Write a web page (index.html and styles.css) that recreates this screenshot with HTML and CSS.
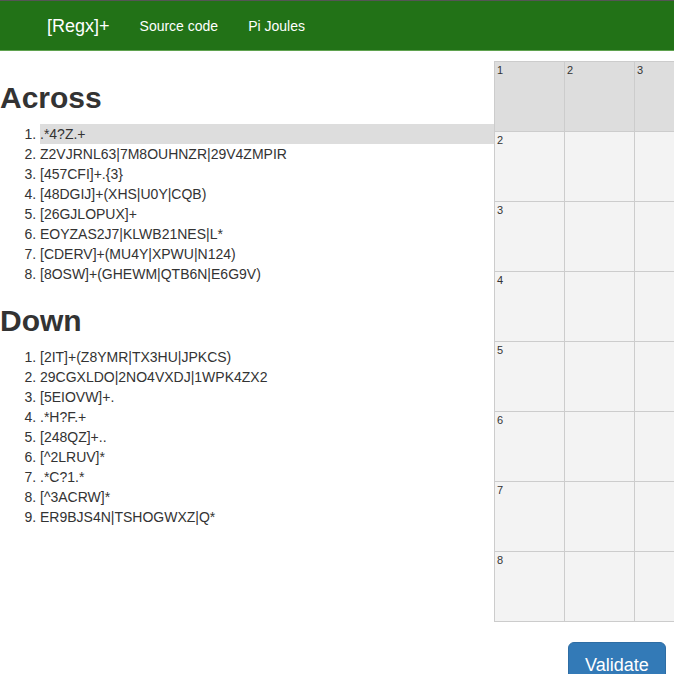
FILE: index.html
```html
<!DOCTYPE html>
<html>
<head>
<meta charset="utf-8">
<link rel="stylesheet" href="styles.css">
</head>
<body>
<nav class="navbar">
  <a class="brand">[Regx]+</a>
  <a class="nav-link">Source code</a>
  <a class="nav-link">Pi Joules</a>
</nav>
<div class="main">
  <div class="clues">
    <h2>Across</h2>
    <ol>
      <li class="active">.*4?Z.+</li>
      <li>Z2VJRNL63|7M8OUHNZR|29V4ZMPIR</li>
      <li>[457CFI]+.{3}</li>
      <li>[48DGIJ]+(XHS|U0Y|CQB)</li>
      <li>[26GJLOPUX]+</li>
      <li>EOYZAS2J7|KLWB21NES|L*</li>
      <li>[CDERV]+(MU4Y|XPWU|N124)</li>
      <li>[8OSW]+(GHEWM|QTB6N|E6G9V)</li>
    </ol>
    <h2>Down</h2>
    <ol>
      <li>[2IT]+(Z8YMR|TX3HU|JPKCS)</li>
      <li>29CGXLDO|2NO4VXDJ|1WPK4ZX2</li>
      <li>[5EIOVW]+.</li>
      <li>.*H?F.+</li>
      <li>[248QZ]+..</li>
      <li>[^2LRUV]*</li>
      <li>.*C?1.*</li>
      <li>[^3ACRW]*</li>
      <li>ER9BJS4N|TSHOGWXZ|Q*</li>
    </ol>
  </div>
  <div class="board">
    <table class="grid">
      <tr class="hl"><td><span class="num">1</span></td><td><span class="num">2</span></td><td><span class="num">3</span></td><td></td><td></td><td></td><td></td><td></td><td></td></tr>
      <tr><td><span class="num">2</span></td><td></td><td></td><td></td><td></td><td></td><td></td><td></td><td></td></tr>
      <tr><td><span class="num">3</span></td><td></td><td></td><td></td><td></td><td></td><td></td><td></td><td></td></tr>
      <tr><td><span class="num">4</span></td><td></td><td></td><td></td><td></td><td></td><td></td><td></td><td></td></tr>
      <tr><td><span class="num">5</span></td><td></td><td></td><td></td><td></td><td></td><td></td><td></td><td></td></tr>
      <tr><td><span class="num">6</span></td><td></td><td></td><td></td><td></td><td></td><td></td><td></td><td></td></tr>
      <tr><td><span class="num">7</span></td><td></td><td></td><td></td><td></td><td></td><td></td><td></td><td></td></tr>
      <tr><td><span class="num">8</span></td><td></td><td></td><td></td><td></td><td></td><td></td><td></td><td></td></tr>
    </table>
    <button class="btn">Validate</button>
  </div>
</div>
</body>
</html>
```
FILE: styles.css
```css
html, body {
  margin: 0;
  padding: 0;
}
body {
  font-family: "Liberation Sans", Arial, sans-serif;
  font-size: 14px;
  line-height: 20px;
  color: #333;
  background: #fff;
  overflow: hidden;
}
.navbar {
  display: flex;
  align-items: center;
  height: 49px;
  background: #227217;
  border-top: 1px solid #555;
  border-bottom: 1px solid #5fa24f;
  padding-left: 32px;
  box-sizing: content-box;
}
.brand {
  font-size: 18px;
  line-height: 20px;
  color: #fff;
  padding: 15px;
}
.nav-link {
  font-size: 14px;
  line-height: 20px;
  color: #fff;
  padding: 15px;
}
.main {
  display: flex;
  align-items: flex-start;
  margin-top: 10px;
}
.clues {
  width: 494px;
  flex: none;
}
h2 {
  font-size: 30px;
  line-height: 1.1;
  font-weight: bold;
  margin: 20px 0 10px;
  color: #333;
}
ol {
  margin: 0 0 10px;
  padding-left: 40px;
}
li.active {
  background: #ddd;
}
.board {
  flex: none;
  display: flex;
  flex-direction: column;
  align-items: flex-start;
}
.grid {
  border-collapse: collapse;
}
.grid td {
  width: 69px;
  height: 69px;
  padding: 0;
  border: 1px solid #ccc;
  background: #f3f3f3;
  vertical-align: top;
}
.grid tr.hl td {
  background: #ddd;
}
.num {
  display: block;
  font-size: 11px;
  line-height: 12px;
  padding: 2px 0 0 2px;
  color: #333;
}
.btn {
  margin: 20px 0 0 74px;
  font-family: "Liberation Sans", Arial, sans-serif;
  font-size: 18px;
  line-height: 1.3333333;
  padding: 10px 16px;
  border: 1px solid #2e6da4;
  border-radius: 6px;
  background: #337ab7;
  color: #fff;
}
```
